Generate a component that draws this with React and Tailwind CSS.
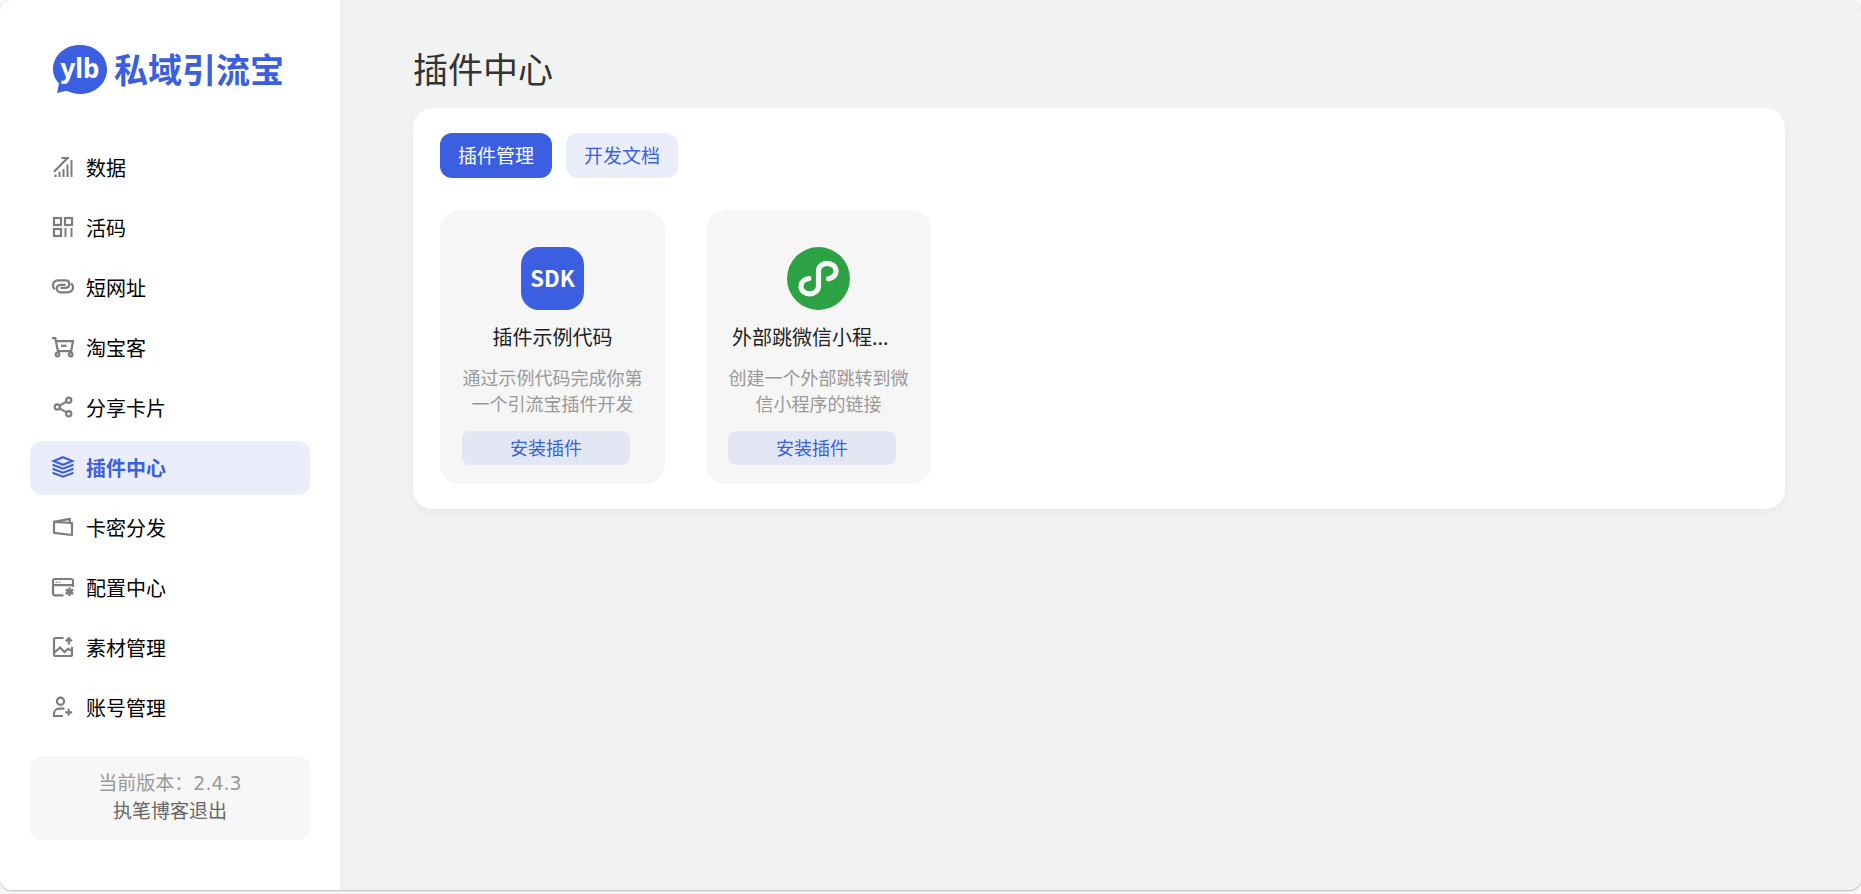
import { useState } from 'react';
import clsx from 'clsx';

const NavIcon = ({ children }) => (
  <svg
    className="w-[22px] h-[22px] shrink-0 overflow-visible"
    viewBox="0 0 22 22"
    fill="none"
    stroke="currentColor"
    strokeWidth="2.2"
    aria-hidden="true"
  >
    {children}
  </svg>
);

const menus = [
  {
    name: '数据',
    icon: (
      <>
        <path d="M3.5 17.5V20M7.5 14.7V20M11.5 12V20M15.5 7.5V20M19.5 3V20" strokeWidth="2" />
        <path d="M2 14.7L15.5 1M9.5 1H17" />
      </>
    )
  },
  {
    name: '活码',
    icon: (
      <>
        <rect x="2" y="1" width="7" height="7" />
        <rect x="13" y="1" width="7" height="7" />
        <rect x="2" y="12" width="7" height="7" />
        <path d="M13.5 11V20M19.5 11V20" strokeWidth="2" />
      </>
    )
  },
  {
    name: '短网址',
    icon: (
      <>
        <path d="M3 12.3C.6 10.6.4 7.4 2 5.2 3 3.8 4.6 3.3 6 3.3h7.5c5 0 5 7.5 0 7.5H8.5" />
        <path d="M19 6.3c2.4 1.7 2.6 4.9 1 7.1-1 1.4-2.6 1.9-4 1.9H8.5c-5 0-5-7.5 0-7.5h5" />
      </>
    )
  },
  {
    name: '淘宝客',
    icon: (
      <>
        <path d="M0 1h3.2L6 14.2h13.2l1.8-10H4" />
        <path d="M9 8.8h5.5" />
        <circle cx="5.5" cy="17.5" r="1.8" />
        <circle cx="18.7" cy="17.5" r="1.8" />
      </>
    )
  },
  {
    name: '分享卡片',
    icon: (
      <>
        <circle cx="16.7" cy="3.2" r="2.6" />
        <circle cx="5.3" cy="10" r="2.6" />
        <circle cx="16.7" cy="16.8" r="2.6" />
        <path d="M7.6 8.6L14.4 4.6M7.6 11.4L14.4 15.4" />
      </>
    )
  },
  {
    name: '插件中心',
    icon: (
      <>
        <path d="M11 .2L20.5 4 11 7.8 1.5 4z" strokeWidth="2" />
        <path d="M.5 7.8L11 11.8 21.5 7.8M.5 11.8L11 15.8 21.5 11.8M.5 15.8L11 19.8 21.5 15.8" strokeWidth="2" />
      </>
    )
  },
  {
    name: '卡密分发',
    icon: (
      <>
        <path d="M2 4.8L20 6V18L2 15.8z" strokeLinejoin="round" />
        <path d="M2 4.8L17.8 1.8V5.6" strokeLinejoin="round" />
      </>
    )
  },
  {
    name: '配置中心',
    icon: (
      <>
        <path d="M11.5 18.3H3a2 2 0 0 1-2-2V4a2 2 0 0 1 2-2h16a2 2 0 0 1 2 2v6M1 8.2h20" />
        <path d="M3.8 5.1h1.6M6.8 5.1h1.6" strokeWidth="1.4" />
        <path d="M17.5 10.5v8.6M13.8 12.6l7.4 4.3M13.8 16.9l7.4-4.3" strokeWidth="2.4" />
      </>
    )
  },
  {
    name: '素材管理',
    icon: (
      <>
        <path d="M11.5 1H3.5A1.5 1.5 0 0 0 2 2.5V17.5A1.5 1.5 0 0 0 3.5 19H18.5A1.5 1.5 0 0 0 20 17.5V10" />
        <path d="M2.5 15.5L8 10.5 12.5 15 16 11.8 20 14" />
        <path d="M16.8 7.5V1.3M13.8 4.2L16.8 1.2 19.8 4.2" />
      </>
    )
  },
  {
    name: '账号管理',
    icon: (
      <>
        <circle cx="8.5" cy="4.3" r="3.6" />
        <path d="M12.5 11.7H7a5 5 0 0 0-5 5V19h9M16.7 11.8v7M13.2 15.3h7" />
      </>
    )
  }
];

const plugins = [
  {
    name: '插件示例代码',
    desc: '通过示例代码完成你第一个引流宝插件开发',
    logo: (
      <div className="flex items-center justify-center w-[63px] h-[63px] pb-0.5 rounded-[18px] bg-[#3b5fe0] text-white text-[22px] font-bold">
        SDK
      </div>
    )
  },
  {
    name: '外部跳微信小程...',
    desc: '创建一个外部跳转到微信小程序的链接',
    logo: (
      <svg className="w-[63px] h-[63px]" viewBox="0 0 63 63" fill="none" aria-hidden="true">
        <circle cx="31.5" cy="31.5" r="31.5" fill="#2ca245" />
        <path
          d="M21.8 31.5C17 32.3 14 35.3 14 39.2c0 4.5 4 7.6 8.8 7.6s8.7-3.3 8.7-7.6V24c0-4.4 3.9-7.7 8.7-7.7S49 19.5 49 24c0 3.8-3 6.7-7.5 7.8"
          stroke="#f6f6f6"
          strokeWidth="5.2"
          strokeLinecap="round"
        />
      </svg>
    )
  }
];

const Logo = () => (
  <a href="#" className="flex items-center gap-[7px] h-[50px] pl-[53px] text-[#3b5fe0]">
    <svg className="w-[54px] h-[50px] shrink-0" viewBox="0 0 54 50" aria-hidden="true">
      <path d="M27 0C42 0 54 10.5 54 24.5S42 49 27 49c-5 0-9.5-1.2-13.5-3.2L4 48l2-9.5C2 34.5 0 29.5 0 24.5 0 10.500 12 0 27 0z" fill="currentColor" />
      <text x="27" y="33" textAnchor="middle" fill="#fff" fontSize="26" fontWeight="700" fontFamily="'Noto Sans', 'Open Sans', sans-serif">
        ylb
      </text>
    </svg>
    <span className="pb-0.5 text-[34px] leading-[48px] font-bold whitespace-nowrap">私域引流宝</span>
  </a>
);

const PluginCard = ({ plugin }) => (
  <div className="w-[225px] pt-[37px] pb-[19px] px-[22px] rounded-[20px] bg-[#f6f6f6]">
    <div className="flex justify-center">{plugin.logo}</div>
    <h3
      className={clsx(
        'mt-3 px-1 text-[20px] leading-[30px] text-[#1f1f1f] whitespace-nowrap',
        plugin.name.length > 8 ? 'text-left' : 'text-center'
      )}
    >
      {plugin.name}
    </h3>
    <p className="mt-3 text-center text-[18px] leading-[26px] text-[#999]">{plugin.desc}</p>
    <button type="button" className="block w-[168px] h-[34px] pb-0.5 mt-[15px] rounded-lg bg-[#e3e7f3] text-[18px] leading-8 text-[#3b5fe0]">
      安装插件
    </button>
  </div>
);

const App = () => {
  const [active, setActive] = useState('插件中心');
  const [tab, setTab] = useState('插件管理');

  return (
    <div className="min-h-screen flex flex-col pb-1 bg-[#f7f7f7] font-['Noto_Sans_CJK_SC',sans-serif] font-normal">
      <div className="flex-1 flex rounded-[12px] overflow-hidden bg-[#f1f3f3] shadow-[0_1px_2px_rgba(0,0,0,0.25)]">
        {/* Sidebar */}
        <aside className="w-[340px] shrink-0 pt-[45px] bg-white shadow-[0_0_10px_rgba(0,0,0,0.03)]">
          <Logo />
          <nav className="flex flex-col gap-[6px] mt-[46px] px-[30px]">
            {menus.map((item) => (
              <a
                key={item.name}
                href="#"
                onClick={() => setActive(item.name)}
                className={clsx(
                  'flex items-center gap-3 h-[54px] pb-px pl-[22px] rounded-[12px] text-[20px]',
                  active === item.name ? 'bg-[#eaeefb] text-[#3b5fe0] font-bold' : 'text-black'
                )}
              >
                <span className={active === item.name ? 'text-[#3b5fe0]' : 'text-[#7d7d7d]'}>
                  <NavIcon>{item.icon}</NavIcon>
                </span>
                {item.name}
              </a>
            ))}
          </nav>
          <div className="mt-[21px] mx-[30px] pt-3 pb-4 rounded-[12px] bg-[#f7f7f7] text-center text-[19px] leading-7">
            <p className="h-7 text-[#999]">
              当前版本：<span className="font-['DejaVu_Sans',sans-serif]">2.4.3</span>
            </p>
            <p className="h-7 text-[#666]">
              执笔博客<a href="#">退出</a>
            </p>
          </div>
        </aside>

        {/* Content */}
        <main className="flex-1 min-w-0 pt-[43px] pl-[73px] pr-[76px]">
          <h1 className="text-[35px] leading-[50px] text-[#333]">插件中心</h1>
          <section className="mt-[15px] pt-[25px] pb-[25px] px-[27px] rounded-[20px] bg-white shadow-[0_5px_10px_rgba(0,0,0,0.03)]">
            <div className="flex gap-[14px]">
              {['插件管理', '开发文档'].map((name) => (
                <button
                  key={name}
                  type="button"
                  onClick={() => setTab(name)}
                  className={clsx(
                    'w-[112px] h-[45px] rounded-[12px] text-[19px]',
                    tab === name ? 'bg-[#3b5fe0] text-white' : 'bg-[#eaeefb] text-[#3b5fe0]'
                  )}
                >
                  {name}
                </button>
              ))}
            </div>
            <div className="flex flex-wrap gap-[41px] mt-8">
              {plugins.map((plugin) => (
                <PluginCard key={plugin.name} plugin={plugin} />
              ))}
            </div>
          </section>
        </main>
      </div>
    </div>
  );
};

export default App;
